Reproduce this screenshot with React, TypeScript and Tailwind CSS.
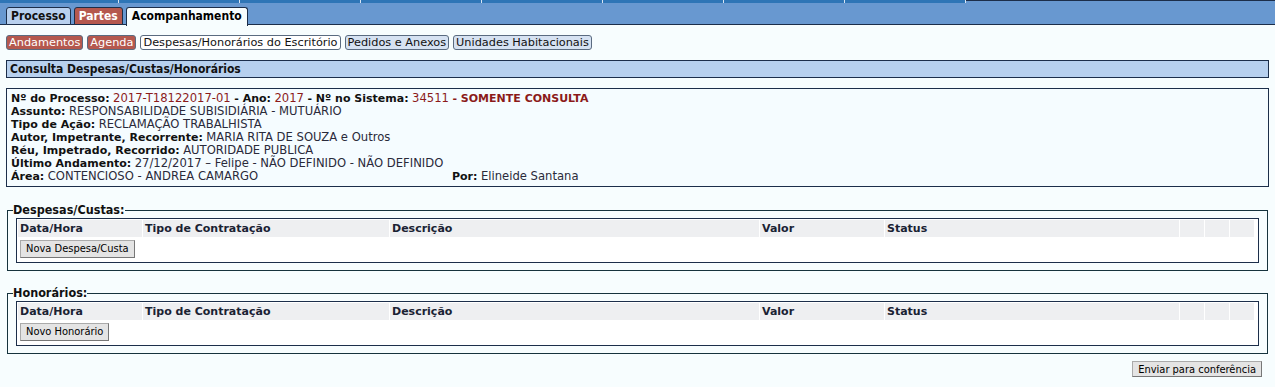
const font = { fontFamily: '"DejaVu Sans", Verdana, sans-serif' };

function Strip() {
  const segs = [0, 1, 2, 3, 4, 5, 6, 7];
  return (
    <div className="flex h-[3px]">
      <div className="flex ml-[-2px]">
        {segs.map((s) => (
          <div key={s} className="w-[121px] h-[3px] bg-[#2e75b6] border-r border-[#dbe6f3]" />
        ))}
      </div>
      <div className="flex-1 border-t border-[#1c2e4a] bg-[#6898d0]" />
    </div>
  );
}

function TopTabs() {
  return (
    <div className="h-[22px] bg-[#6898d0] border-b border-[#1c2e4a] flex items-end gap-[3px] pl-[6px]">
      <div className="h-[18px] mb-[-1px] px-[4px] bg-[#b8d0ee] border border-[#1c2e4a] rounded-t-[3px] text-[12px] font-bold font-stretch-condensed leading-[16px] text-[#111]">
        Processo
      </div>
      <div className="h-[18px] mb-[-1px] px-[4px] bg-[#b5584e] border border-[#1c2e4a] rounded-t-[3px] text-[12px] font-bold font-stretch-condensed leading-[16px] text-white">
        Partes
      </div>
      <div className="h-[19px] mb-[-2px] px-[5px] bg-[#f7fdfe] border border-b-0 border-[#1c2e4a] rounded-t-[3px] text-[12px] font-bold font-stretch-condensed leading-[16px] text-black">
        Acompanhamento
      </div>
    </div>
  );
}

function SubNav() {
  const items = [
    { t: "Andamentos", c: "bg-[#b5584e] text-white" },
    { t: "Agenda", c: "bg-[#b5584e] text-white" },
    { t: "Despesas/Honorários do Escritório", c: "bg-white text-[#111]" },
    { t: "Pedidos e Anexos", c: "bg-[#d6e2f2] text-[#111]" },
    { t: "Unidades Habitacionais", c: "bg-[#d6e2f2] text-[#111]" },
  ];
  return (
    <div className="flex gap-[4px] pl-[6px] mt-[10px]">
      {items.map((i) => (
        <div
          key={i.t}
          className={`h-[15px] px-[2px] border border-[#5a6b80] rounded-[3px] text-[11.3px] leading-[13px] ${i.c}`}
        >
          {i.t}
        </div>
      ))}
    </div>
  );
}

function Info() {
  const L = "font-bold text-[#111]";
  const V = "text-[#2a2a3a] text-[11.6px]";
  const R = "text-[#8b1a1a] text-[11.6px]";
  return (
    <div className="mx-[6px] mt-[10px] border border-[#1c2e4a] bg-[#f5fcff] px-[4px] pt-[3px] pb-[3px] text-[11px] leading-[13px]">
      <div>
        <span className={L}>Nº do Processo:</span> <span className={R}>2017-T18122017-01</span>{" "}
        <span className={L}>- Ano:</span> <span className={R}>2017</span>{" "}
        <span className={L}>- Nº no Sistema:</span> <span className={R}>34511</span>{" "}
        <span className="text-[#8b1a1a] font-bold">- SOMENTE CONSULTA</span>
      </div>
      <div>
        <span className={L}>Assunto:</span> <span className={V}>RESPONSABILIDADE SUBISIDIÁRIA - MUTUÁRIO</span>
      </div>
      <div>
        <span className={L}>Tipo de Ação:</span> <span className={V}>RECLAMAÇÃO TRABALHISTA</span>
      </div>
      <div>
        <span className={L}>Autor, Impetrante, Recorrente:</span> <span className={V}>MARIA RITA DE SOUZA e Outros</span>
      </div>
      <div>
        <span className={L}>Réu, Impetrado, Recorrido:</span> <span className={V}>AUTORIDADE PUBLICA</span>
      </div>
      <div>
        <span className={L}>Último Andamento:</span> <span className={V}>27/12/2017 – Felipe - NÃO DEFINIDO - NÃO DEFINIDO</span>
      </div>
      <div className="flex">
        <div className="w-[441px]">
          <span className={L}>Área:</span> <span className={V}>CONTENCIOSO - ANDREA CAMARGO</span>
        </div>
        <div>
          <span className={L}>Por:</span> <span className={V}>Elineide Santana</span>
        </div>
      </div>
    </div>
  );
}

function Section({ title, button }: { title: string; button: string }) {
  const cols = [
    { t: "Data/Hora", w: "w-[124px]" },
    { t: "Tipo de Contratação", w: "w-[246px]" },
    { t: "Descrição", w: "w-[369px]" },
    { t: "Valor", w: "w-[124px]" },
    { t: "Status", w: "w-[294px]" },
    { t: "", w: "w-[24px]" },
    { t: "", w: "w-[24px]" },
    { t: "", w: "w-[24px]" },
  ];
  return (
    <fieldset className="mx-[7px] border border-[#16333d] px-0 pb-[7px] pt-0">
      <legend className="ml-[5px] px-0 text-[12.5px] font-bold font-stretch-condensed text-[#111] leading-[14px]">
        {title}
      </legend>
      <div className="mx-[8px] mt-[1px] border border-[#1c2e4a] bg-white p-[1px]">
        <div className="flex gap-[1px]">
          {cols.map((c, i) => (
            <div
              key={i}
              className={`${c.w} h-[17px] bg-[#eeeff1] px-[2px] text-[11px] font-bold leading-[17px] text-[#1a2233]`}
            >
              {c.t}
            </div>
          ))}
        </div>
        <div className="flex pl-[2px] pt-[3px] pb-[3px]">
          <button className="h-[18px] px-[5px] bg-[#e4e4e4] border border-[#aaa] border-r-[#777] border-b-[#777] text-[11px] font-stretch-condensed leading-[14px] text-black">
            {button}
          </button>
        </div>
      </div>
    </fieldset>
  );
}

export default function App() {
  return (
    <div className="w-[1275px] h-[387px] bg-[#f7fdfe] overflow-hidden" style={font}>
      <Strip />
      <TopTabs />
      <SubNav />
      <div className="mx-[6px] mt-[10px] h-[18px] bg-[#b7d0ee] border border-[#1c2e4a] pl-[3px] text-[12px] font-bold font-stretch-condensed leading-[16px] text-[#111]">
        Consulta Despesas/Custas/Honorários
      </div>
      <Info />
      <div className="mt-[16px]">
        <Section title="Despesas/Custas:" button="Nova Despesa/Custa" />
      </div>
      <div className="mt-[15px]">
        <Section title="Honorários:" button="Novo Honorário" />
      </div>
      <div className="flex justify-end pr-[13px] mt-[7px]">
        <button className="h-[16px] px-[5px] bg-[#e4e4e4] border border-[#aaa] border-r-[#777] border-b-[#777] text-[11px] font-stretch-condensed leading-[13px] text-black">
          Enviar para conferência
        </button>
      </div>
    </div>
  );
}
